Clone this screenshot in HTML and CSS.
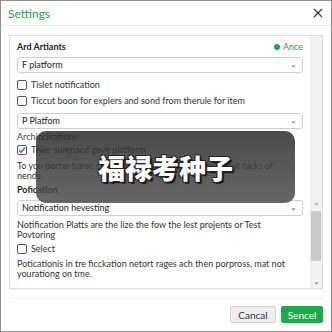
FILE: index.html
```html
<!DOCTYPE html>
<html>
<head>
<meta charset="utf-8">
<link rel="stylesheet" href="styles.css">
</head>
<body>
<div class="dialog">
  <div class="header">
    <span class="title">Settings</span>
    <svg class="close" width="10" height="10" viewBox="0 0 10 10"><path d="M1 1L9 9M9 1L1 9" stroke="#333" stroke-width="1.1"/></svg>
  </div>
  <div class="body">
    <div class="panel">
      <div class="content">
        <div class="row-head"><span class="bold">Ard Artiants</span><span class="status"><span class="dot"></span>Ance</span></div>
        <div class="select s1"><span>F platform</span><span class="chev">&#8964;</span></div>
        <label class="check c1"><span class="box"></span>Tislet notification</label>
        <label class="check c2"><span class="box"></span>Ticcut boon for explers and sond from therule for item</label>
        <div class="select s2"><span>P Platfom</span><span class="chev">&#8964;</span></div>
        <div class="label">Archicciirations</div>
        <label class="check c3"><span class="box checked"><svg width="8" height="8" viewBox="0 0 8 8"><path d="M1 4.2L3.1 6.3L7 1.5" fill="none" stroke="#2f6fd1" stroke-width="1.4"/></svg></span>Thier surenacd geve platform</label>
        <p class="para p1">To you porter barse comes vent forth to the nisting great tacks of<br>nends.</p>
        <div class="bold sec">Pofication</div>
        <div class="select s3"><span>Notification hevesting</span><span class="chev">&#8964;</span></div>
        <p class="para p2">Notification Platts are the lize the fow the lest projents or Test<br>Povtoring</p>
        <label class="check c4"><span class="box"></span>Select</label>
        <p class="para p3">Poticationis in tre ficckation netort rages ach then porpross, mat not<br>yourationg on tme.</p>
      </div>
      <div class="scroll">
        <span class="arrow up">&#8963;</span>
        <span class="thumb"></span>
        <span class="arrow down">&#8964;</span>
      </div>
    </div>
  </div>
  <div class="footer">
    <button class="btn cancel">Cancal</button>
    <button class="btn ok">Sencel</button>
  </div>
  <div class="overlay"><span>福禄考种子</span></div>
</div>
</body>
</html>
```

FILE: styles.css
```css
* { box-sizing: border-box; }
html, body { margin: 0; padding: 0; background: #8a8a8a; }
.dialog {
  position: relative;
  width: 332px; height: 332px;
  border: 1px solid #8f8f8f;
  background: #fff;
  display: flex; flex-direction: column;
  font-family: "Lato", "Liberation Sans", sans-serif;
  font-size: 9px; color: #333;
}
.header {
  height: 25px;
  padding: 0 8px 0 7px;
  display: flex; align-items: center; justify-content: space-between;
  border-bottom: 1px solid #ececec;
}
.title { color: #2f9a45; font-size: 12px; }
.body { padding: 9px 8px 0 8px; }
.panel {
  height: 254px;
  border: 1px solid #dcdcdc;
  display: flex;
}
.content { flex: 1; padding: 6px 7px 0 7px; line-height: 10px; }
.row-head { display: flex; justify-content: space-between; align-items: center; height: 10px; }
.bold { font-weight: bold; color: #222; }
.status { color: #2f9a45; display: flex; align-items: center; gap: 3px; font-size: 9px; }
.dot { width: 6px; height: 6px; border-radius: 50%; background: #22a447; }
.select {
  height: 16px;
  border: 1px solid #cfcfcf; border-radius: 3px;
  padding: 0 5px 0 4px;
  display: flex; align-items: center; justify-content: space-between;
  color: #222; font-size: 9px;
}
.chev { font-size: 8px; color: #555; line-height: 6px; height: 8px; }
.s1 { margin-top: 5px; }
.check { display: flex; align-items: center; gap: 4px; height: 10px; }
.box { width: 10px; height: 10px; border: 1px solid #555; border-radius: 2px; display: flex; align-items: center; justify-content: center; }
.c1 { margin-top: 7px; }
.c2 { margin-top: 6px; }
.s2 { margin-top: 7px; }
.label { margin-top: 3px; color: #444; }
.c3 { margin-top: 3px; }
.para { margin: 0; white-space: nowrap; line-height: 10px; }
.p1 { margin-top: 6px; }
.sec { margin-top: 4px; }
.s3 { margin-top: 5px; }
.p2 { margin-top: 4px; }
.c4 { margin-top: 4px; }
.p3 { margin-top: 5px; }
.scroll {
  width: 12px; background: #f1f1f1;
  display: flex; flex-direction: column; align-items: center;
  padding-top: 167px;
}
.arrow { font-size: 8px; color: #666; line-height: 6px; height: 7px; }
.thumb { width: 10px; height: 50px; background: #c9c9c9; margin-top: 1px; }
.down { margin-top: 17px; }
.footer {
  margin: 9px 8px 0;
  border-top: 1px solid #ececec;
  padding-top: 7px;
  display: flex; justify-content: flex-end; gap: 5px;
}
.btn {
  height: 17px; border-radius: 2px;
  font-family: inherit; font-size: 10px; padding: 0;
}
.cancel { width: 46px; background: #efefef; border: 1px solid #d2d2d2; color: #333; }
.ok { width: 42px; background: #1ea94a; border: 1px solid #1ea94a; color: #fff; }
.overlay {
  position: absolute; left: 35px; top: 130px;
  width: 259px; height: 72px;
  border-radius: 10px;
  background: linear-gradient(rgba(40,40,40,0.84), rgba(75,75,75,0.84));
  display: flex; align-items: center; justify-content: center;
}
.overlay span {
  font-family: "Noto Sans CJK SC", sans-serif;
  font-weight: 900; font-size: 27px; color: #fff;
  text-shadow: 1px 1px 0 #222, -1px -1px 0 #222, 1px -1px 0 #222, -1px 1px 0 #222, 2px 2px 1px #111;
}
```
